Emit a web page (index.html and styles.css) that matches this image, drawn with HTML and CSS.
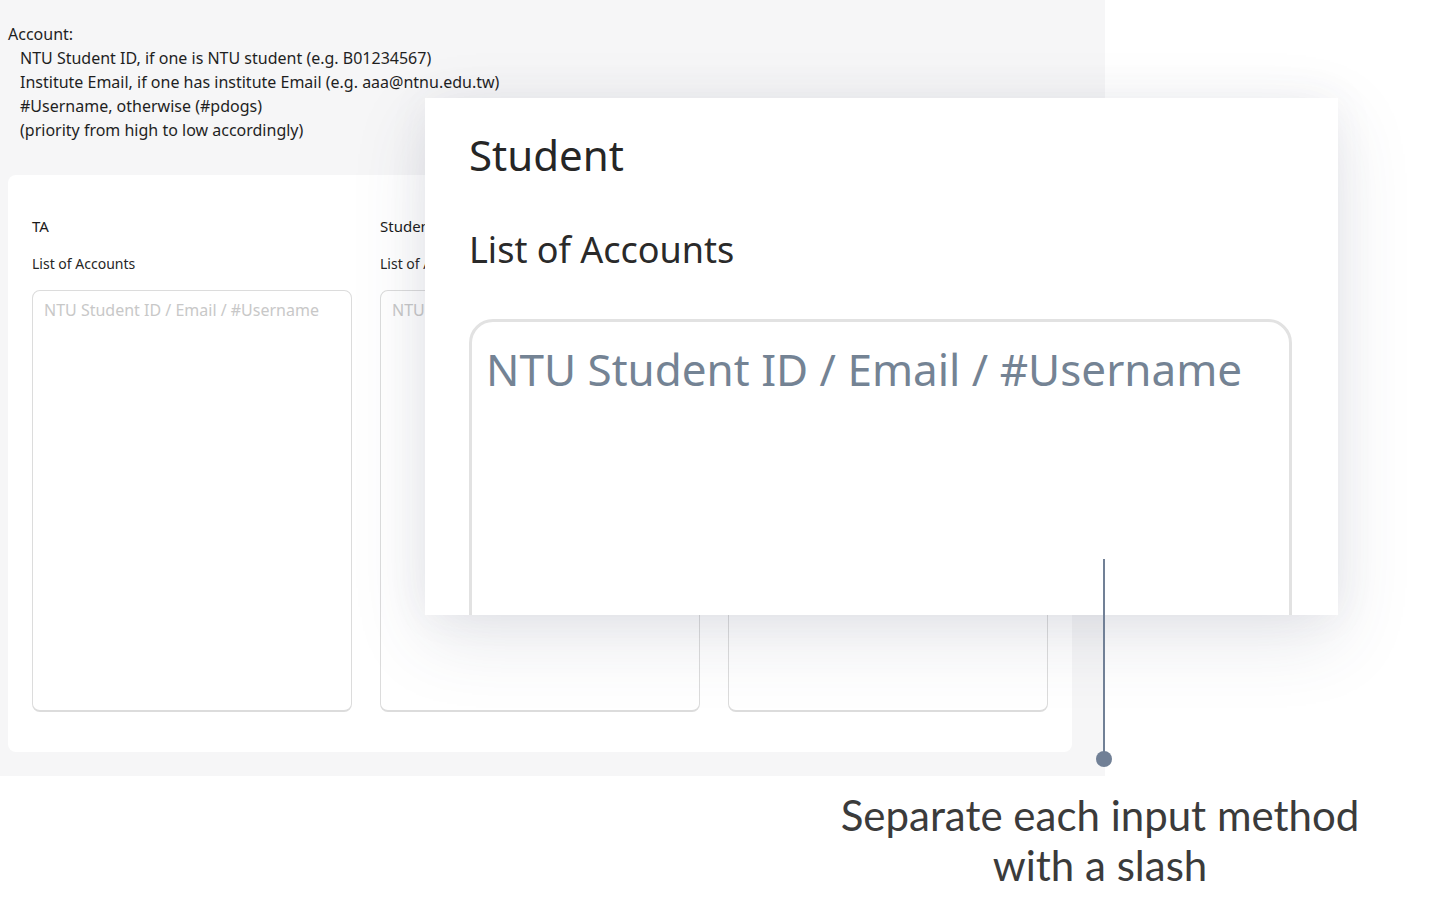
FILE: index.html
```html
<!DOCTYPE html>
<html lang="en">
<head>
<meta charset="utf-8">
<title>Account list</title>
<link rel="stylesheet" href="styles.css">
</head>
<body>
<div class="stage">
  <section class="app">
    <div class="note">
      <div class="note-line">Account:</div>
      <div class="note-line indent">NTU Student ID, if one is NTU student (e.g. B01234567)</div>
      <div class="note-line indent">Institute Email, if one has institute Email (e.g. aaa@ntnu.edu.tw)</div>
      <div class="note-line indent">#Username, otherwise (#pdogs)</div>
      <div class="note-line indent">(priority from high to low accordingly)</div>
    </div>
    <div class="card">
      <div class="col">
        <div class="col-title">TA</div>
        <div class="col-label">List of Accounts</div>
        <textarea class="accounts" placeholder="NTU Student ID / Email / #Username"></textarea>
      </div>
      <div class="col">
        <div class="col-title">Student</div>
        <div class="col-label">List of Accounts</div>
        <textarea class="accounts" placeholder="NTU Student ID / Email / #Username"></textarea>
      </div>
      <div class="col">
        <div class="col-title">Observer</div>
        <div class="col-label">List of Accounts</div>
        <textarea class="accounts" placeholder="NTU Student ID / Email / #Username"></textarea>
      </div>
    </div>
  </section>

  <div class="zoom">
    <div class="zoom-title">Student</div>
    <div class="zoom-label">List of Accounts</div>
    <div class="zoom-box"><span class="zoom-placeholder">NTU Student ID / Email / #Username</span></div>
  </div>

  <div class="pointer">
    <span class="pointer-line"></span>
    <span class="pointer-dot"></span>
  </div>

  <p class="caption">Separate each input method<br>with a slash</p>
</div>
</body>
</html>
```

FILE: styles.css
```css
html, body {
  margin: 0;
  padding: 0;
  background: #ffffff;
}

.stage {
  position: relative;
  width: 1449px;
  height: 905px;
  overflow: hidden;
  font-family: "Noto Sans", "Open Sans", sans-serif;
  color: #212121;
}

.app {
  width: 1105px;
  height: 776px;
  box-sizing: border-box;
  background: #f6f6f7;
  padding: 22px 8px 0 8px;
}

.note {
  font-size: 16px;
  line-height: 24px;
  color: #1f1f1f;
}

.note-line.indent {
  padding-left: 12px;
}

.card {
  margin-top: 33px;
  width: 1064px;
  box-sizing: border-box;
  background: #ffffff;
  border-radius: 8px;
  padding: 40px 24px 40px 24px;
  display: flex;
  gap: 28px;
}

.col {
  width: 320px;
  display: flex;
  flex-direction: column;
}

.col-title {
  font-size: 15px;
  line-height: 22px;
  font-weight: 400;
  color: #1a1a1a;
}

.col-label {
  margin-top: 17px;
  font-size: 14px;
  line-height: 20px;
  color: #262626;
}

.accounts {
  margin-top: 16px;
  height: 422px;
  width: 320px;
  box-sizing: border-box;
  border: 1px solid #dcdcdc;
  border-bottom-width: 2px;
  border-radius: 8px;
  padding: 8px 11px;
  font-family: "Noto Sans", sans-serif;
  font-size: 16px;
  line-height: 22px;
  resize: none;
  background: #ffffff;
  outline: none;
}

.accounts::placeholder {
  color: #c8c8c8;
}

.zoom {
  position: absolute;
  left: 425px;
  top: 98px;
  width: 913px;
  height: 517px;
  box-sizing: border-box;
  padding: 32px 0 0 44px;
  background: #ffffff;
  overflow: hidden;
  box-shadow: 0 24px 70px rgba(60, 70, 100, 0.13), 0 0 40px rgba(60, 70, 100, 0.06);
}

.zoom-title {
  font-size: 42px;
  line-height: 49px;
  font-weight: 400;
  color: #262626;
}

.zoom-label {
  margin-top: 50px;
  font-size: 36px;
  line-height: 42px;
  color: #2a2a2a;
}

.zoom-box {
  margin-top: 48px;
  width: 823px;
  height: 400px;
  box-sizing: border-box;
  border: 3px solid #e2e2e2;
  border-radius: 24px;
  padding: 18px 14px;
}

.zoom-placeholder {
  display: block;
  font-size: 44px;
  line-height: 58px;
  color: #748394;
  white-space: nowrap;
}

.pointer {
  position: absolute;
  left: 1096px;
  top: 559px;
  width: 16px;
  display: flex;
  flex-direction: column;
  align-items: center;
}

.pointer-line {
  display: block;
  width: 2px;
  height: 194px;
  background: #718096;
}

.pointer-dot {
  display: block;
  width: 16px;
  height: 16px;
  margin-top: -2px;
  border-radius: 50%;
  background: #718096;
}

.caption {
  margin: 14px 0 0 798px;
  width: 604px;
  text-align: center;
  font-family: Lato, "Liberation Sans", sans-serif;
  font-size: 42px;
  line-height: 50px;
  color: #3b3b3b;
}
```
